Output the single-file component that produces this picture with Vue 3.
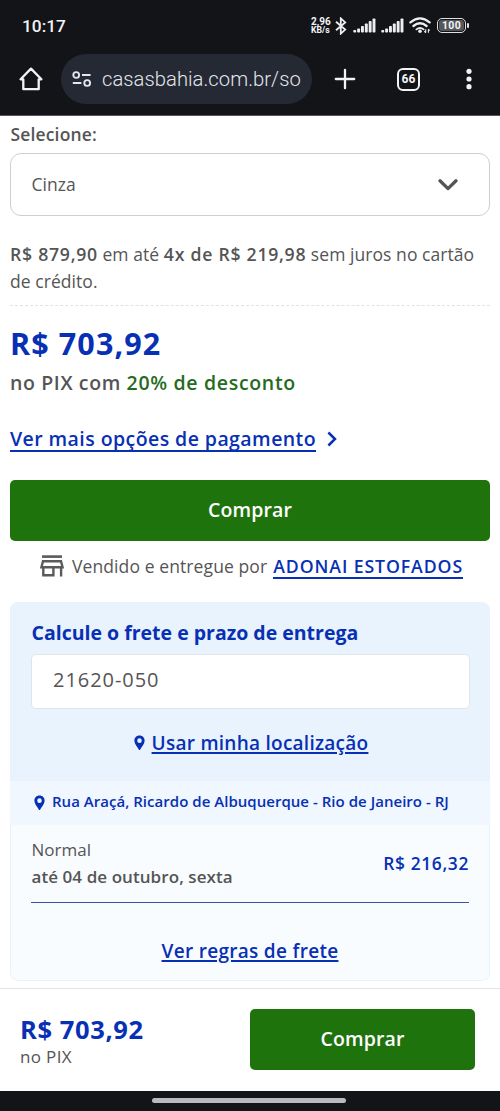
<script setup>
const bars = [2.5, 4, 6.5, 9, 11.5, 14]
const pin = 'M6 0C2.7 0 0.4 2.4 0.4 5.6C0.4 9.4 3.4 12 5.2 15.4Q6 16.6 6.8 15.4C8.6 12 11.6 9.4 11.6 5.6C11.6 2.4 9.3 0 6 0ZM6 3.2A2.5 2.5 0 1 1 6 8.2A2.5 2.5 0 1 1 6 3.2Z'
</script>

<template>
  <div class="screen">
    <header class="browser">
      <div class="status">
        <span class="clock">10:17</span>
        <div class="indicators">
          <div class="speed"><span>2,96</span><span class="unit">KB/s</span></div>
          <svg class="bt" width="12" height="18" viewBox="0 0 12 18">
            <path d="M1 4.8L10.2 12.6L5.8 16.6V1.4L10.2 5.4L1 13.2" fill="none" stroke="#eceef0" stroke-width="1.8" />
          </svg>
          <svg v-for="n in 2" :key="n" class="signal" width="23" height="15" viewBox="0 0 23 15">
            <rect v-for="(h, i) in bars" :key="i" :x="i * 3.85 + 0.3" :y="14.5 - h" width="2.9" :height="h" rx="0.8" fill="#eceef0" />
          </svg>
          <svg class="wifi" width="23" height="17" viewBox="0 0 23 17">
            <g fill="none" stroke="#eceef0" stroke-width="2.3" stroke-linecap="round">
              <path d="M1.4 5.4Q11 -2.6 20.6 5.4" />
              <path d="M4.4 9Q11 3.4 17.6 9" />
              <path d="M7.4 12.4Q11 9.6 14.6 12.4" stroke-width="1.8" />
            </g>
            <circle cx="11" cy="14.3" r="1.8" fill="#eceef0" />
            <path d="M16.7 12.2V15.6M15.4 14.2L16.7 15.8M19.4 15.8V12.2M20.6 13.6L19.4 12.2" fill="none" stroke="#eceef0" stroke-width="1.1" />
          </svg>
          <div class="battery"><span>100</span></div>
        </div>
      </div>
      <div class="toolbar">
        <svg class="home" width="24" height="24" viewBox="0 0 24 24">
          <path d="M1.6 12.3H4.3V22.2H19.7V12.3H22.4L12 1.6Z" fill="none" stroke="#f2f3f6" stroke-width="2.3" stroke-linejoin="round" />
        </svg>
        <div class="omnibox">
          <svg class="tune" width="20" height="18" viewBox="0 0 20 18">
            <g fill="none" stroke="#e4e6ee" stroke-width="1.9">
              <circle cx="4.2" cy="5" r="2.9" />
              <path d="M10 5H18.6M0.8 13H9.4" />
              <circle cx="15.2" cy="13" r="2.9" />
            </g>
          </svg>
          <span>casasbahia.com.br/so</span>
        </div>
        <svg class="plus" width="22" height="22" viewBox="0 0 22 22">
          <path d="M11 1.8V20.2M1.8 11H20.2" stroke="#f2f3f6" stroke-width="2.3" stroke-linecap="round" />
        </svg>
        <div class="tabs">66</div>
        <svg class="dots" width="6" height="22" viewBox="0 0 6 22">
          <circle v-for="y in [3.3, 11, 18.7]" :key="y" cx="3" :cy="y" r="2.6" fill="#f2f3f6" />
        </svg>
      </div>
    </header>

    <main>
      <div class="label">Selecione:</div>
      <div class="select">
        <span>Cinza</span>
        <svg width="20" height="14" viewBox="0 0 20 14">
          <path d="M2 2.8L10 10.6L18 2.8" fill="none" stroke="#555" stroke-width="3.3" stroke-linecap="round" stroke-linejoin="round" />
        </svg>
      </div>
      <p class="credit"><b>R$ 879,90</b> em até <b>4x de R$ 219,98</b> sem juros no cartão<br>de crédito.</p>
      <div class="price">R$ 703,92</div>
      <div class="pix">no PIX com <span class="off">20% de desconto</span></div>
      <div class="more">
        <a>Ver mais opções de pagamento</a>
        <svg width="10" height="16" viewBox="0 0 10 16">
          <path d="M1.4 1.5L8 8L1.4 14.5" fill="none" stroke="#0730b4" stroke-width="2.5" />
        </svg>
      </div>
      <button class="buy">Comprar</button>
      <div class="seller">
        <svg width="24" height="22" viewBox="0 0 24 22">
          <g fill="none" stroke="#5a5a5a">
            <path d="M2 1.6H22" stroke-width="2.6" />
            <path d="M3 6.3H21L22.6 12.3H1.4Z" stroke-width="2.4" />
            <path d="M3.3 12V20.3H13.4V12.5M21.1 12V21.5" stroke-width="2.4" />
          </g>
        </svg>
        <span class="by">Vendido e entregue por</span>
        <a>ADONAI ESTOFADOS</a>
      </div>

      <section class="shipping">
        <div class="calc">
          <h2>Calcule o frete e prazo de entrega</h2>
          <div class="cep">21620-050</div>
          <div class="locate">
            <svg width="11" height="16" viewBox="0 0 12 16.5"><path :d="pin" fill="#0730b4" fill-rule="evenodd" /></svg>
            <a>Usar minha localização</a>
          </div>
        </div>
        <div class="address">
          <svg width="11" height="16" viewBox="0 0 12 16.5"><path :d="pin" fill="#0730b4" fill-rule="evenodd" /></svg>
          <span>Rua Araçá, Ricardo de Albuquerque - Rio de Janeiro - RJ</span>
        </div>
        <div class="result">
          <div class="option">
            <div>
              <div class="kind">Normal</div>
              <div class="date">até 04 de outubro, sexta</div>
            </div>
            <div class="cost">R$ 216,32</div>
          </div>
          <a class="rules">Ver regras de frete</a>
        </div>
      </section>
    </main>

    <footer>
      <div>
        <div class="total">R$ 703,92</div>
        <div class="note">no PIX</div>
      </div>
      <button class="buy">Comprar</button>
    </footer>
    <div class="gesture"><i></i></div>
  </div>
</template>

<style>
body { margin: 0; background: #fff; }
</style>

<style scoped>
* { box-sizing: border-box; }
.screen {
  width: 500px;
  height: 1111px;
  display: flex;
  flex-direction: column;
  overflow: hidden;
  background: #fff;
  color: #555;
  font-family: "Open Sans", "Noto Sans", sans-serif;
  font-size: 17.5px;
  white-space: nowrap;
}
svg { display: block; flex: none; }

.browser {
  height: 116px;
  flex: none;
  background: #131418;
  border-bottom: 1px solid #55565c;
  color: #f2f3f6;
  font-family: Roboto, sans-serif;
}
.status {
  height: 51px;
  display: flex;
  justify-content: space-between;
  padding: 0 34px 0 22px;
  align-items: center;
}
.clock { font-size: 17.3px; font-weight: 500; }
.indicators { display: flex; align-items: center; }
.speed { display: flex; flex-direction: column; font-size: 10px; font-weight: 700; line-height: 9px; margin-right: 5px; width: 19px; padding-top: 1px; }
.unit { font-size: 8.7px; }
.bt { margin-right: 6px; }
.signal { margin-right: 5px; }
.wifi { margin-right: 5px; }
.battery {
  position: relative;
  width: 29px;
  height: 15px;
  border: 1.5px solid #dfe0e2;
  border-radius: 5px;
  padding: 1px;
}
.battery span {
  display: block;
  height: 100%;
  border-radius: 3px;
  background: #55575a;
  text-align: center;
  font-size: 10.5px;
  line-height: 12px;
  font-weight: 700;
  letter-spacing: 0.3px;
}
.battery::after {
  content: "";
  position: absolute;
  right: -4px;
  top: 4px;
  width: 2px;
  height: 5px;
  border-radius: 1px;
  background: #dfe0e2;
}
.toolbar { height: 56px; display: flex; align-items: center; padding-left: 19px; }
.omnibox {
  width: 251px;
  height: 50px;
  margin-left: 18px;
  padding-left: 11px;
  border-radius: 25px;
  background: #242933;
  display: flex;
  align-items: center;
  font-size: 20.2px;
  font-weight: 350;
  letter-spacing: 0.05px;
  color: #e4e6ee;
}
.omnibox span { margin-left: 10px; }
.plus { margin-left: 22px; }
.tabs {
  width: 23px;
  height: 23px;
  margin-left: 41px;
  border: 2px solid #f2f3f6;
  border-radius: 6px;
  font-size: 12px;
  line-height: 19px;
  font-weight: 700;
  text-align: center;
}
.dots { margin-left: 46px; }

main { height: 872px; flex: none; padding: 6px 10px 0; }
.label { height: 24px; padding-left: 0.5px; line-height: 24px; font-weight: 650; letter-spacing: 0.15px; }
.select {
  height: 63px;
  margin-top: 7px;
  padding: 0 31px 1.5px 20.5px;
  border: 1px solid #cfcfcf;
  border-radius: 11px;
  display: flex;
  align-items: center;
  justify-content: space-between;
}
.select svg { margin-top: 2px; }
.credit {
  height: 65px;
  margin: 25px 0 0;
  line-height: 27px;
  letter-spacing: 0.06px;
  border-bottom: 1px dashed #e2e2e2;
}
.credit b { font-size: 17.7px; font-weight: 650; letter-spacing: 0.72px; }
.price { margin-top: 18px; line-height: 38px; font-size: 30.5px; font-weight: 700; letter-spacing: 1.1px; color: #0730b4; }
.pix { margin-top: 7px; line-height: 28px; font-size: 19.5px; font-weight: 600; letter-spacing: 0.62px; }
.off { color: #256b22; letter-spacing: 0.68px; font-weight: 650; }
.more { display: flex; align-items: flex-start; margin-top: 29px; }
.more a {
  height: 26px;
  line-height: 25px;
  font-size: 19.5px;
  font-weight: 600;
  letter-spacing: 0.43px;
  color: #0730b4;
  border-bottom: 2px solid #0730b4;
}
.more svg { margin: 5px 0 0 11px; }
.buy {
  display: flex;
  width: 480px;
  height: 61px;
  margin-top: 28px;
  padding: 0 0 2px;
  align-items: center;
  justify-content: center;
  border: 0;
  border-radius: 5px;
  background: #1f730d;
  color: #fff;
  font-family: inherit;
  font-size: 19.5px;
  font-weight: 650;
  letter-spacing: 0.15px;
}
.seller { display: flex; margin: 13px 0 0 30px; line-height: 24px; }
.seller svg { margin-top: 1px; }
.by { margin-left: 8px; letter-spacing: 0.1px; }
.seller a {
  height: 25px;
  line-height: 25px;
  margin-left: 6px;
  font-size: 17.7px;
  font-weight: 600;
  letter-spacing: 0.9px;
  color: #0730b4;
  border-bottom: 2px solid #0730b4;
}
.shipping { margin-top: 23px; height: 379px; border-radius: 8px; overflow: hidden; color: #555; }
.calc { height: 179px; padding: 17px 20px 0 21px; background: #e8f3fe; }
h2 { margin: 0; padding-left: 0.5px; font-size: 19.5px; line-height: 27px; font-weight: 700; color: #0730b4; }
.cep {
  height: 55px;
  margin-top: 8px;
  padding: 0 0 4px 21px;
  border: 1px solid #dfe5ec;
  border-radius: 5px;
  background: #fff;
  display: flex;
  align-items: center;
  font-size: 20px;
  letter-spacing: 0.95px;
}
.locate { display: flex; justify-content: center; margin-top: 22px; padding-left: 1px; line-height: 24px; }
.locate svg { margin: 4px 7px 0 0; }
.locate a, .rules {
  font-size: 19px;
  font-weight: 600;
  letter-spacing: 0.26px;
  color: #0730b4;
  text-decoration: underline;
  text-decoration-thickness: 1.5px;
  text-underline-offset: 2px;
}
.address {
  height: 44px;
  padding: 0 0 4px 24px;
  background: #f0f7ff;
  display: flex;
  align-items: center;
  font-size: 15px;
  font-weight: 650;
  letter-spacing: 0.03px;
  color: #0730b4;
}
.address span { margin-left: 7px; }
.address svg { margin-top: 3px; }
.result {
  height: 156px;
  padding: 11px 20px 0;
  background: #f9fcff;
  border: 1px solid #e6f2fb;
  border-top: 0;
  border-radius: 0 0 8px 8px;
}
.option {
  display: flex;
  justify-content: space-between;
  height: 67px;
  line-height: 27px;
  font-size: 17px;
  border-bottom: 1.5px solid #3a54a3;
}
.kind, .date { padding-left: 0.5px; }
.date { font-weight: 650; letter-spacing: 0.07px; }
.cost { line-height: 54px; font-size: 17.4px; font-weight: 600; letter-spacing: 0.65px; color: #0730b4; }
.rules { display: block; margin-top: 36px; line-height: 24px; text-align: center; letter-spacing: 0.3px; }

footer {
  height: 103px;
  flex: none;
  display: flex;
  justify-content: space-between;
  padding: 20px 25px 0 20px;
  background: #fff;
  border-top: 1px solid #e2e3e5;
}
footer .buy { width: 225px; margin: 0; }
.total { margin-top: 4px; line-height: 32px; font-size: 25.5px; font-weight: 700; letter-spacing: 0.6px; color: #0730b4; }
.note { line-height: 23px; font-size: 17px; letter-spacing: 0.35px; }
.gesture { height: 20px; flex: none; background: #131418; display: flex; justify-content: center; padding: 7px 3px 0 0; }
.gesture i { width: 194px; height: 5px; border-radius: 3px; background: #b9babd; }
</style>
